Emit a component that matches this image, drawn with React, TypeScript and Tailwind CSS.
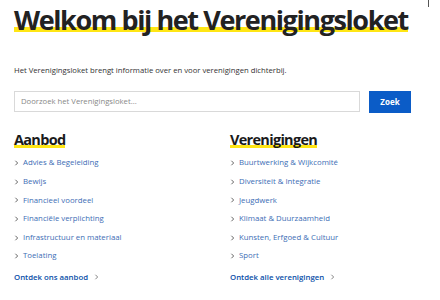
import React from "react";

const aanbod = [
  "Advies & Begeleiding",
  "Bewijs",
  "Financieel voordeel",
  "Financiële verplichting",
  "Infrastructuur en materiaal",
  "Toelating",
];

const verenigingen = [
  "Buurtwerking & Wijkcomité",
  "Diversiteit & Integratie",
  "Jeugdwerk",
  "Klimaat & Duurzaamheid",
  "Kunsten, Erfgoed & Cultuur",
  "Sport",
];

function Chevron({ className = "" }: { className?: string }) {
  return (
    <svg viewBox="0 0 6 8" className={className} fill="none" stroke="currentColor" strokeWidth="1.2">
      <path d="M1.5 1 L4.5 4 L1.5 7" />
    </svg>
  );
}

function LinkColumn({ title, items, more }: { title: string; items: string[]; more: string }) {
  return (
    <div className="flex flex-col">
      <h2 className="self-start text-[14.5px] font-bold leading-[20px] tracking-[-0.7px] text-[#1a1a1a] bg-[linear-gradient(to_bottom,transparent_76%,#ffe615_76%,#ffe615_90%,transparent_90%)]">
        {title}
      </h2>
      <ul className="mt-[4px] flex flex-col">
        {items.map((item) => (
          <li key={item} className="flex h-[18.6px] items-center gap-[4px] text-[7.8px] text-[#3d6db5]">
            <Chevron className="h-[6px] w-[5px] text-[#555]" />
            <span>{item}</span>
          </li>
        ))}
      </ul>
      <a className="mt-[6px] flex items-center gap-[6px] text-[7.8px] font-semibold text-[#0a4fa8]">
        {more}
        <Chevron className="h-[6px] w-[5px] text-[#777]" />
      </a>
    </div>
  );
}

export default function App() {
  return (
    <div className="relative h-[300px] w-[440px] overflow-hidden bg-white pl-[14px] pr-[29px] pt-[3px] font-['Open_Sans','Noto_Sans',sans-serif]">
      <span className="absolute right-[11px] top-0 h-[7px] w-[1.5px] bg-[#555]" />
      <h1 className="inline-block whitespace-nowrap text-[27px] font-bold leading-[34px] tracking-[-1.4px] text-[#222] bg-[linear-gradient(to_bottom,transparent_70%,#ffe615_70%,#ffe615_86%,transparent_86%)]">
        Welkom bij het Verenigingsloket
      </h1>
      <p className="mt-[27px] text-[7.7px] leading-[12px] text-[#333]">
        Het Verenigingsloket brengt informatie over en voor verenigingen dichterbij.
      </p>
      <div className="mt-[15px] flex gap-[9px]">
        <div className="flex h-[21px] flex-1 items-center border border-[#d9d9d9] px-[6px] text-[7.7px] text-[#888]">
          Doorzoek het Verenigingsloket...
        </div>
        <button className="flex h-[22px] w-[42px] items-center justify-center bg-[#0b5cc7] text-[8px] font-bold text-white">
          Zoek
        </button>
      </div>
      <div className="mt-[17px] grid grid-cols-[216px_1fr]">
        <LinkColumn title="Aanbod" items={aanbod} more="Ontdek ons aanbod" />
        <LinkColumn title="Verenigingen" items={verenigingen} more="Ontdek alle verenigingen" />
      </div>
    </div>
  );
}
